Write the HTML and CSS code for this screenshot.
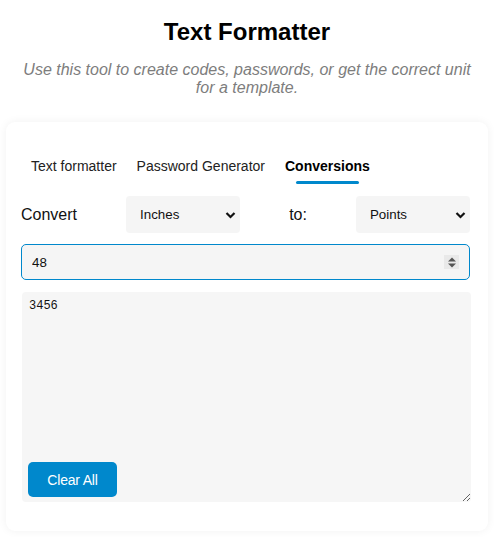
FILE: index.html
```html
<!DOCTYPE html>
<html lang="en">
<head>
<meta charset="utf-8">
<title>Text Formatter</title>
<link rel="stylesheet" href="styles.css">
</head>
<body>
<header class="header">
  <h1 class="title">Text Formatter</h1>
  <p class="subtitle">Use this tool to create codes, passwords, or get the correct unit for a template.</p>
</header>
<main class="card">
  <nav class="tabs">
    <span class="tab">Text formatter</span>
    <span class="tab">Password Generator</span>
    <span class="tab tab-active">Conversions</span>
  </nav>
  <div class="convert-row">
    <span class="label">Convert</span>
    <select class="unit-select"><option>Inches</option></select>
    <span class="label">to:</span>
    <select class="unit-select"><option>Points</option></select>
  </div>
  <div class="number-wrap">
    <input class="number-input" type="text" value="48">
    <span class="spinner">
      <svg width="10" height="13" viewBox="0 0 10 13"><path d="M5 1.5 L9 5.5 H1 Z M5 11.5 L9 7.5 H1 Z" fill="#555"/></svg>
    </span>
  </div>
  <div class="output-wrap">
    <textarea class="output" readonly>3456</textarea>
    <button class="clear-btn" type="button">Clear All</button>
  </div>
</main>
</body>
</html>
```
FILE: styles.css
```css
html, body {
  margin: 0;
  padding: 0;
  background: #ffffff;
}
body {
  font-family: "Liberation Sans", Arial, sans-serif;
  color: #111;
  padding: 0 6px 6px;
}
.header {
  padding: 18px 14px 0;
  text-align: center;
}
.title {
  margin: 0;
  font-size: 24px;
  line-height: 28px;
  font-weight: 700;
  color: #000;
}
.subtitle {
  margin: 15px 0 0;
  font-size: 16px;
  line-height: 18px;
  font-style: italic;
  color: #7d7d7d;
}
.card {
  margin-top: 25px;
  background: #fff;
  border-radius: 9px;
  box-shadow: 0 0 10px rgba(0, 0, 0, 0.06);
  padding: 15px 18px 29px 15px;
}
.tabs {
  display: flex;
}
.tab {
  display: flex;
  flex-direction: column;
  align-items: center;
  padding: 21px 10px 0;
  font-size: 14px;
  line-height: 17px;
  color: #222;
}
.tab::after {
  content: "";
  display: block;
  width: 75%;
  height: 3px;
  margin-top: 6px;
  border-radius: 2px;
  background: transparent;
}
.tab-active {
  font-weight: 700;
  color: #000;
}
.tab-active::after {
  background: #0088cc;
}
.convert-row {
  display: flex;
  justify-content: space-between;
  align-items: center;
  margin-top: 12px;
}
.label {
  font-size: 16px;
  color: #111;
}
.unit-select {
  appearance: none;
  -webkit-appearance: none;
  width: 114px;
  height: 37px;
  border: none;
  border-radius: 4px;
  background-color: #f5f5f5;
  background-image: url("data:image/svg+xml;utf8,<svg xmlns='http://www.w3.org/2000/svg' width='11' height='8' viewBox='0 0 11 8'><path d='M1.5 2 L5.5 6 L9.5 2' fill='none' stroke='%23111' stroke-width='2.2'/></svg>");
  background-repeat: no-repeat;
  background-position: right 4px center;
  padding: 0 14px;
  font-family: "Liberation Sans", Arial, sans-serif;
  font-size: 13.33px;
  color: #111;
}
.number-wrap {
  position: relative;
  margin-top: 11px;
}
.number-input {
  display: block;
  box-sizing: border-box;
  width: 449px;
  height: 36px;
  border: 1px solid #0088cc;
  border-radius: 5px;
  background: #f5f5f5;
  padding: 0 10px;
  font-family: "Liberation Sans", Arial, sans-serif;
  font-size: 13.33px;
  color: #111;
  outline: none;
}
.spinner {
  position: absolute;
  right: 11px;
  top: 11px;
  width: 15px;
  height: 14px;
  background: #e9e9e9;
  display: flex;
  align-items: center;
  justify-content: center;
}
.output-wrap {
  position: relative;
  margin-top: 12px;
  margin-left: 1px;
}
.output {
  display: block;
  box-sizing: border-box;
  width: 449px;
  height: 210px;
  border: none;
  border-radius: 4px;
  background: #f6f6f6;
  padding: 7px 7px;
  font-family: "Liberation Mono", "DejaVu Sans Mono", monospace;
  font-size: 12px;
  line-height: 15px;
  color: #111;
  outline: none;
}
.clear-btn {
  position: absolute;
  left: 6px;
  bottom: 5px;
  width: 89px;
  height: 35px;
  border: none;
  border-radius: 5px;
  background: #0088cc;
  color: #fff;
  font-family: "Liberation Sans", Arial, sans-serif;
  font-size: 14px;
  letter-spacing: -0.2px;
}
```
